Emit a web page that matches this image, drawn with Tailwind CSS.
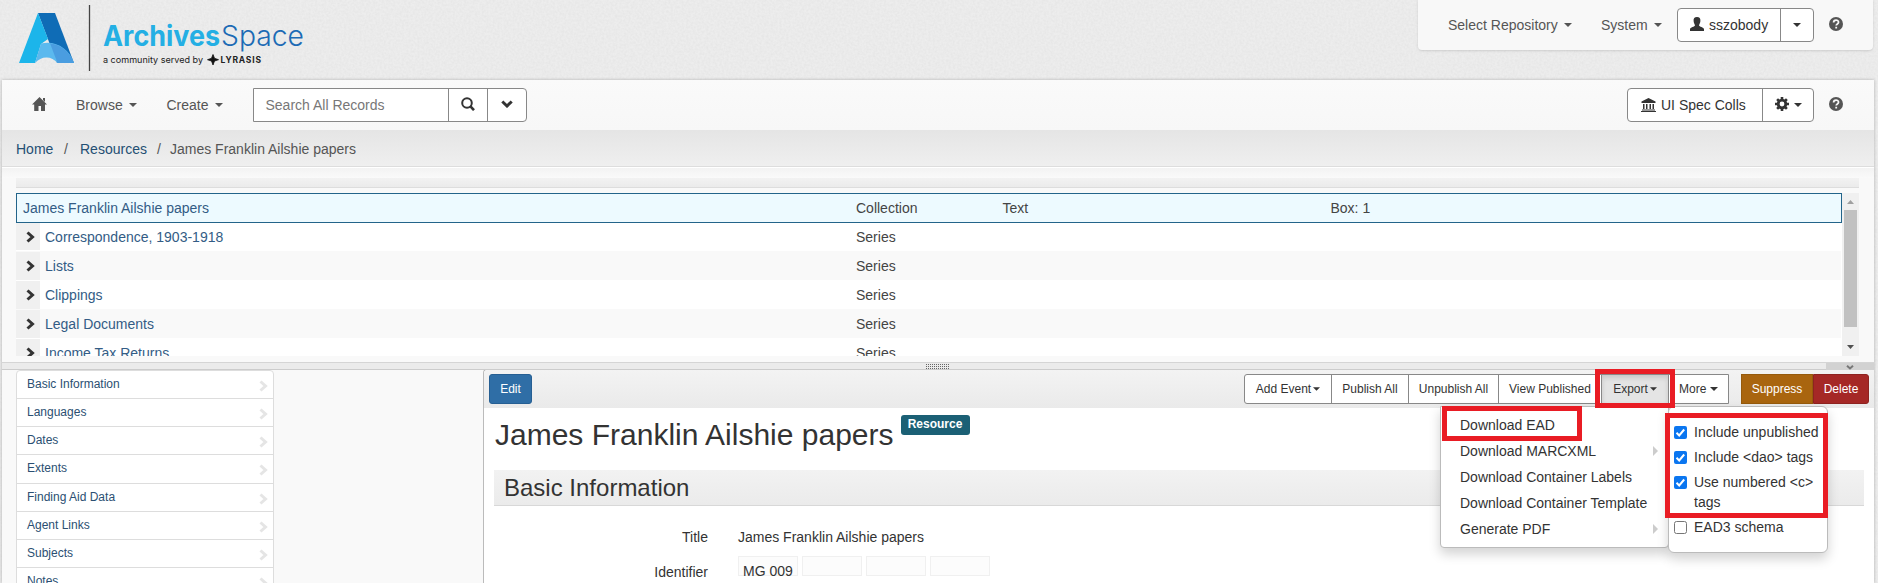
<!DOCTYPE html>
<html lang="en">
<head>
<meta charset="utf-8">
<title>ArchivesSpace</title>
<script src="https://cdn.jsdelivr.net/npm/@tailwindcss/browser@4"></script>
</head>
<body class="relative isolate h-[583px] w-[1878px] overflow-hidden bg-[#e9e9e9] font-['Liberation_Sans',sans-serif] text-sm leading-5 text-[#333]">
<!-- paper texture -->
<svg class="absolute inset-0 -z-10" width="1878" height="583"><filter id="grain"><feTurbulence type="fractalNoise" baseFrequency=".45" numOctaves="2" seed="3"/><feColorMatrix values="0 0 0 0 .4  0 0 0 0 .4  0 0 0 0 .4  .18 0 0 0 -.05"/></filter><rect width="1878" height="583" fill="#ededed"/><rect width="1878" height="583" filter="url(#grain)"/></svg>
<svg class="hidden">
  <symbol id="caret" viewBox="0 0 8 4"><path d="M0 0h8L4 4z" fill="currentColor"/></symbol>
  <symbol id="help" viewBox="0 0 14 14"><circle cx="7" cy="7" r="7" fill="#555"/><path d="M4.6 5.5C4.6 2.4 9.5 2.4 9.5 5.2 9.5 7 7.2 6.8 7.2 8.6M7.2 9.7v1.8" fill="none" stroke="#f8f8f8" stroke-width="1.8"/></symbol>
  <symbol id="chev" viewBox="0 0 9 12"><path d="M1.500 1.500 6.500 6l-5 4.500" fill="none" stroke="currentColor" stroke-width="3"/></symbol>
</svg>

<header class="flex h-20 items-start justify-between pr-[5px]">
  <svg width="320" height="80" viewBox="0 0 320 80">
    <path d="M38 13h17l19 50H57z" fill="#0f6cb6"/>
    <path d="M38 13 48 39 41 44 35 63H19z" fill="#1cb5ea"/>
    <path d="M41 43.500C55 40 69 48 74 63H57.500C52 55.500 41 55.500 35 63z" fill="#5bb9ee"/>
    <path d="M50 43.200C62 45 70 52 74 63H57.500z" fill="#4a9de0"/>
    <path d="M89.500 5v66" stroke="#444" stroke-width="1.300"/>
    <text x="103" y="45.500" textLength="117" lengthAdjust="spacingAndGlyphs" font-family="Inter" font-weight="700" font-size="28" fill="#24afe4">Archives</text>
    <text x="221" y="45.500" textLength="83" lengthAdjust="spacingAndGlyphs" font-family="Inter" font-weight="300" font-size="28" fill="#1c6bb5">Space</text>
    <text x="103" y="62.500" textLength="100" lengthAdjust="spacingAndGlyphs" font-family="Inter" font-weight="400" font-size="9" fill="#222">a community served by</text>
    <path d="M213 54.500 214.500 58.300 218.500 59.700 214.500 61 213 65 211.500 61 207.500 59.700 211.500 58.300z" fill="#111" stroke="#111" stroke-width=".8"/>
    <text x="220.500" y="62.500" textLength="40.500" font-family="Inter" font-weight="700" font-size="8.500" fill="#222">LYRASIS</text>
  </svg>
  <div class="flex h-[50px] w-[455px] rounded-b bg-[#f8f8f8] pt-2 pl-[30px] text-[#555] shadow-sm">
    <div class="flex h-[34px] w-[153px] items-center gap-[6px]">Select Repository<svg width="8" height="4"><use href="#caret"/></svg></div>
    <div class="flex h-[34px] w-[76px] items-center gap-[6px]">System<svg width="8" height="4"><use href="#caret"/></svg></div>
    <div class="flex h-[34px] w-[137px] rounded border border-[#888] bg-white text-[#333]">
      <div class="flex w-[103px] items-center gap-[5px] border-r border-[#888] pl-3"><svg class="mb-0.5" width="14" height="14" viewBox="0 0 14 14"><path d="M7 0C9.600 0 10.600 1.600 10.400 4 10.200 6.300 9.300 7 9 8.300 9 10.200 14 10 14 12.300V14H0v-1.700C0 10 5 10.200 5 8.300 4.700 7 3.800 6.300 3.600 4 3.400 1.600 4.400 0 7 0z" fill="#333"/></svg>sszobody</div>
      <div class="flex flex-1 items-center justify-center"><svg width="8" height="4"><use href="#caret"/></svg></div>
    </div>
    <svg class="mt-[9px] ml-[15px]" width="14" height="14"><use href="#help"/></svg>
  </div>
</header>

<div class="ml-0.5 h-[503px] w-[1872px] bg-[#f9f9f9] shadow-[0_0_3px_rgba(0,0,0,.25)]">
  <nav class="flex h-[50px] items-start rounded-t bg-linear-to-b from-[#fafafa] to-[#f7f7f7] pt-2 text-[#555]">
    <svg class="mt-[9px] ml-[30px]" width="15" height="14" viewBox="0 0 15 14"><path d="M7.500 0 15 7.500h-2V14H9V9H6.500v5H2.200V7.500H0zM11 1h2v4l-2-2z" fill="#555"/></svg>
    <div class="ml-[29px] flex h-[34px] w-[90.500px] items-center gap-[6px]">Browse<svg width="8" height="4"><use href="#caret"/></svg></div>
    <div class="flex h-[34px] w-[86.500px] items-center gap-[6px]">Create<svg width="8" height="4"><use href="#caret"/></svg></div>
    <div class="flex h-[34px] w-[274px] rounded-r border border-[#888] bg-white">
      <div class="flex w-[195px] items-center border-r border-[#888] pl-[11.500px] text-[#777]">Search All Records</div>
      <div class="flex w-[39px] items-center justify-center border-r border-[#888] pb-0.5"><svg width="14" height="14" viewBox="0 0 14 14"><circle cx="6" cy="6" r="4.800" fill="none" stroke="#333" stroke-width="2"/><path d="m9.200 9.200 3.800 4" stroke="#333" stroke-width="2.600"/></svg></div>
      <div class="flex flex-1 items-center justify-center pb-0.5"><svg width="12" height="8" viewBox="0 0 12 8"><path d="m1.300 1.500 4.700 4.500 4.700-4.500" fill="none" stroke="#333" stroke-width="3"/></svg></div>
    </div>
    <div class="ml-auto flex h-[34px] w-[187px] rounded border border-[#888] bg-white text-[#333]">
      <div class="flex w-[135px] items-center gap-[5px] border-r border-[#888] pl-[13px]"><svg width="15" height="14" viewBox="0 0 15 14"><path d="M7.500 0 14.500 3.500V5H.5V3.500zM2 6h1.500v5H2zM5 6h1.500v5H5zM8.500 6H10v5H8.500zM11.500 6H13v5h-1.500zM1 11.500h13V12.500H1zM0 13h15v1H0z" fill="#333"/></svg>UI Spec Colls</div>
      <div class="flex flex-1 items-center justify-center gap-[5px]"><svg class="mb-0.5" width="14" height="14" viewBox="-7 -7 14 14"><circle r="3.800" fill="none" stroke="#333" stroke-width="2.800"/><path d="M0-7V-4M0 7V4M-7 0H-4M7 0H4M-4.900-4.900-3-3M4.900 4.900 3 3M4.900-4.900 3-3M-4.900 4.900-3 3" stroke="#333" stroke-width="2.600"/></svg><svg width="8" height="4"><use href="#caret"/></svg></div>
    </div>
    <svg class="mt-[9px] mr-[31px] ml-[15px]" width="14" height="14"><use href="#help"/></svg>
  </nav>
  <div class="flex h-[37px] items-center border-b border-[#ddd] bg-linear-to-b from-[#e5e5e5] to-[#efefef] pt-0.5 pl-[14px] text-[#555]">
    <span class="w-12 text-[#244f73]">Home</span><span class="w-4">/</span><span class="w-[77px] text-[#244f73]">Resources</span><span class="w-[13px]">/</span><span>James Franklin Ailshie papers</span>
  </div>
  <div class="h-px bg-white"></div>
  <div class="h-[10px] bg-linear-to-b from-[#f3f3f3] to-[#fafafa]"></div>
  <div class="mr-[15px] ml-[14px] h-[10px] border-b border-[#ddd] bg-linear-to-b from-[#f2f2f2] to-[#ebebeb]"></div>

  <div class="mt-[5px] mr-[15px] ml-[14px] flex h-[163px] overflow-hidden bg-white">
    <div class="w-[1825px]">
      <div class="-mr-px flex h-[30px] items-center border border-[#23648a] bg-[#edfaff] pl-1.5 text-[#444]"><span class="w-[833px] text-[#335c85]">James Franklin Ailshie papers</span><span class="w-[146.500px]">Collection</span><span class="w-[328px]">Text</span><span>Box: 1</span></div>
      <div class="flex h-7 items-center"><div class="mb-px flex h-[27px] w-6 items-center bg-[#f0f0f0] pl-[10px]"><svg class="text-[#333]" width="9" height="12"><use href="#chev"/></svg></div><span class="w-[816px] pl-[5px] text-[#335c85]">Correspondence, 1903-1918</span><span class="text-[#444]">Series</span></div>
      <div class="flex h-[29px] items-center bg-[#f9f9f9]"><div class="flex h-7 w-6 items-center bg-[#f0f0f0] pl-[10px]"><svg class="text-[#333]" width="9" height="12"><use href="#chev"/></svg></div><span class="w-[816px] pl-[5px] text-[#335c85]">Lists</span><span class="text-[#444]">Series</span></div>
      <div class="flex h-[29px] items-center"><div class="flex h-7 w-6 items-center bg-[#f0f0f0] pl-[10px]"><svg class="text-[#333]" width="9" height="12"><use href="#chev"/></svg></div><span class="w-[816px] pl-[5px] text-[#335c85]">Clippings</span><span class="text-[#444]">Series</span></div>
      <div class="flex h-[29px] items-center bg-[#f9f9f9]"><div class="flex h-7 w-6 items-center bg-[#f0f0f0] pl-[10px]"><svg class="text-[#333]" width="9" height="12"><use href="#chev"/></svg></div><span class="w-[816px] pl-[5px] text-[#335c85]">Legal Documents</span><span class="text-[#444]">Series</span></div>
      <div class="flex h-[29px] items-center"><div class="flex h-7 w-6 items-center bg-[#f0f0f0] pl-[10px]"><svg class="text-[#333]" width="9" height="12"><use href="#chev"/></svg></div><span class="w-[816px] pl-[5px] text-[#335c85]">Income Tax Returns</span><span class="text-[#444]">Series</span></div>
    </div>
    <div class="ml-px flex flex-1 flex-col items-center bg-[#f0f0f0] pt-[7px]">
      <svg width="7" height="4" viewBox="0 0 7 4"><path d="M0 4h7L3.500 0z" fill="#a0a0a0"/></svg>
      <div class="mt-[6px] h-[117px] w-[13px] bg-[#c1c1c1]"></div>
      <svg class="mt-[18px]" width="7" height="4" viewBox="0 0 7 4"><path d="M0 0h7L3.500 4z" fill="#505050"/></svg>
    </div>
  </div>

  <div class="mt-[6px] flex h-[7px] items-center border-t border-[#d5d5d5] bg-[#ebebeb]">
    <svg class="ml-[924px]" width="24" height="5"><pattern id="dots" width="2" height="2" patternUnits="userSpaceOnUse"><rect width="1" height="1" fill="#666"/></pattern><rect width="24" height="5" fill="url(#dots)"/></svg>
    <div class="ml-auto flex h-[7px] w-12 items-end justify-center bg-[#d2d2d2]"><svg width="8" height="5" viewBox="0 0 8 5"><path d="m1 .8 3 2.700L7 .8" fill="none" stroke="#777" stroke-width="2"/></svg></div>
  </div>

  <div class="flex h-[214px] overflow-hidden border-t border-[#ccc]">
    <aside class="ml-[14px] h-[230px] w-[258px] shrink-0 divide-y divide-[#ddd] rounded-t border border-[#ddd] bg-white text-xs text-[#2b4f72]">
      <div class="flex h-7 items-center justify-between pr-[5px] pb-0.5 pl-[10px]">Basic Information<svg class="mt-1 text-[#e5e5e5]" width="9" height="12"><use href="#chev"/></svg></div>
      <div class="flex h-7 items-center justify-between pr-[5px] pb-0.5 pl-[10px]">Languages<svg class="mt-1 text-[#e5e5e5]" width="9" height="12"><use href="#chev"/></svg></div>
      <div class="flex h-7 items-center justify-between pr-[5px] pb-0.5 pl-[10px]">Dates<svg class="mt-1 text-[#e5e5e5]" width="9" height="12"><use href="#chev"/></svg></div>
      <div class="flex h-[29px] items-center justify-between pr-[5px] pb-[3px] pl-[10px]">Extents<svg class="mt-1 text-[#e5e5e5]" width="9" height="12"><use href="#chev"/></svg></div>
      <div class="flex h-7 items-center justify-between pr-[5px] pb-0.5 pl-[10px]">Finding Aid Data<svg class="mt-1 text-[#e5e5e5]" width="9" height="12"><use href="#chev"/></svg></div>
      <div class="flex h-7 items-center justify-between pr-[5px] pb-0.5 pl-[10px]">Agent Links<svg class="mt-1 text-[#e5e5e5]" width="9" height="12"><use href="#chev"/></svg></div>
      <div class="flex h-7 items-center justify-between pr-[5px] pb-0.5 pl-[10px]">Subjects<svg class="mt-1 text-[#e5e5e5]" width="9" height="12"><use href="#chev"/></svg></div>
      <div class="flex h-7 items-center justify-between pr-[5px] pb-0.5 pl-[10px]">Notes<svg class="mt-1 text-[#e5e5e5]" width="9" height="12"><use href="#chev"/></svg></div>
    </aside>
    <main class="-mt-px ml-[209px] h-[240px] flex-1 rounded-tl border-t border-l border-[#bbb] bg-white">
      <div class="flex h-[38px] rounded-tl bg-linear-to-b from-[#f3f3f3] to-[#eaeaea] pt-1 pr-[5px] pl-[5px] text-xs">
        <div class="flex h-[30px] w-[43px] items-center justify-center rounded-[3px] border border-[#265f93] bg-[#2f6ea6] text-white">Edit</div>
        <div class="ml-auto flex h-[30px] w-[485px] divide-x divide-[#888] rounded-l-[3px] border border-[#888] bg-white">
          <div class="flex w-[87px] items-center justify-center gap-[2px]">Add Event<svg width="7" height="4"><use href="#caret"/></svg></div>
          <div class="flex w-[77px] items-center justify-center">Publish All</div>
          <div class="flex w-[90px] items-center justify-center">Unpublish All</div>
          <div class="flex w-[103px] items-center pl-[10px]">View Published</div>
          <div class="flex w-[67px] items-center justify-center gap-[2px] bg-[#e4e4e4] shadow-[inset_0_3px_5px_rgba(0,0,0,.125)]">Export<svg width="7" height="4"><use href="#caret"/></svg></div>
          <div class="flex flex-1 items-center gap-1 pl-[10px]">More<svg width="8" height="4"><use href="#caret"/></svg></div>
        </div>
        <div class="ml-3 flex h-[30px] w-[72px] items-center justify-center border border-[#965a0c] bg-[#a9650f] text-white">Suppress</div>
        <div class="flex h-[30px] w-[56px] items-center justify-center rounded-r-[3px] border border-[#8e2320] bg-[#a52826] text-white">Delete</div>
      </div>
      <div class="flex h-[62px] items-start pl-[11px]"><h1 class="pt-[7px] text-[30px] leading-10 whitespace-nowrap">James Franklin Ailshie papers</h1><span class="mt-[7px] ml-[7px] flex h-5 w-[69px] items-center justify-center rounded-[3px] bg-[#1b6075] pb-[3px] text-xs font-bold text-white">Resource</span></div>
      <h2 class="mr-[10px] ml-[10px] h-[36px] border-b border-[#d8d8d8] bg-linear-to-b from-[#f2f2f2] to-[#ebebeb] pl-[10px] text-2xl leading-[35px]">Basic Information</h2>
      <div class="mt-[21px] flex"><span class="w-[224px] text-right">Title</span><span class="ml-[30px]">James Franklin Ailshie papers</span></div>
      <div class="mt-[9px] flex"><span class="w-[224px] pt-[6px] text-right">Identifier</span>
        <div class="ml-[30px] flex gap-1"><span class="h-5 w-[60px] border border-[#f0f0f0] bg-[#fcfcfc] pt-[4px] pl-1 whitespace-nowrap">MG 009</span><span class="h-5 w-[60px] border border-[#f0f0f0] bg-[#fcfcfc]"></span><span class="h-5 w-[60px] border border-[#f0f0f0] bg-[#fcfcfc]"></span><span class="h-5 w-[60px] border border-[#f0f0f0] bg-[#fcfcfc]"></span></div>
      </div>
    </main>
  </div>
</div>

<!-- export menu -->
<div class="absolute top-[406px] left-[1440px] flex h-[142px] w-[229px] flex-col rounded-b border border-[#bbb] bg-white pt-[5px] pl-[19px] leading-[26px] shadow-[0_6px_12px_rgba(0,0,0,.175)]">
  <div>Download EAD</div>
  <div class="flex items-center justify-between pr-[10px]">Download MARCXML<svg width="5" height="10"><path d="M0 0 5 5 0 10z" fill="#ccc"/></svg></div>
  <div>Download Container Labels</div>
  <div>Download Container Template</div>
  <div class="flex items-center justify-between pr-[10px]">Generate PDF<svg width="5" height="10"><path d="M0 0 5 5 0 10z" fill="#ccc"/></svg></div>
</div>
<div class="absolute top-[406px] left-[1668px] flex h-[147px] w-[160px] flex-col gap-[5px] rounded-md border border-[#bbb] bg-white pt-[15px] pl-[5px] shadow-[0_6px_12px_rgba(0,0,0,.175)]">
  <div class="flex gap-[7px] whitespace-nowrap"><svg class="mt-1" width="13" height="13"><rect width="13" height="13" rx="2" fill="#0b76f0"/><path d="m2.500 6.800 2.700 2.700 5-6" fill="none" stroke="#fff" stroke-width="2"/></svg>Include unpublished</div>
  <div class="flex gap-[7px]"><svg class="mt-1" width="13" height="13"><rect width="13" height="13" rx="2" fill="#0b76f0"/><path d="m2.500 6.800 2.700 2.700 5-6" fill="none" stroke="#fff" stroke-width="2"/></svg>Include &lt;dao&gt; tags</div>
  <div class="flex gap-[7px]"><svg class="mt-1" width="13" height="13"><rect width="13" height="13" rx="2" fill="#0b76f0"/><path d="m2.500 6.800 2.700 2.700 5-6" fill="none" stroke="#fff" stroke-width="2"/></svg><span>Use numbered &lt;c&gt;<br>tags</span></div>
  <div class="flex gap-[7px]"><svg class="mt-1" width="13" height="13"><rect x=".5" y=".5" width="12" height="12" rx="2" fill="#fff" stroke="#767676"/></svg>EAD3 schema</div>
</div>
<!-- red callouts -->
<div class="absolute top-[369px] left-[1595px] h-[39px] w-[80px] border-[5px] border-[#e91c24]"></div>
<div class="absolute top-[406px] left-[1442px] h-[35px] w-[140px] border-[5px] border-[#e91c24]"></div>
<div class="absolute top-[413px] left-[1665px] h-[105px] w-[163px] border-[5px] border-[#e91c24]"></div>
</body>
</html>
